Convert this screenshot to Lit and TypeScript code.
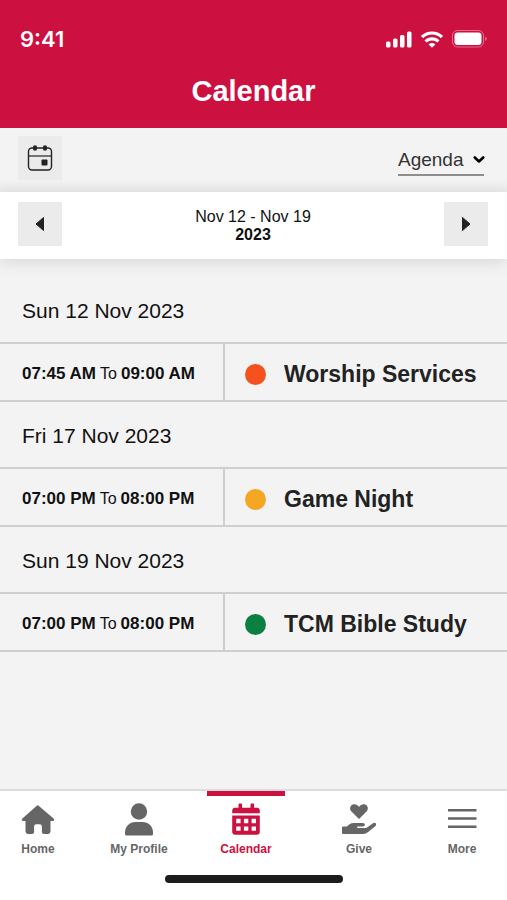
import { LitElement, html, css, svg } from "lit";
import { customElement, state } from "lit/decorators.js";
import { classMap } from "lit/directives/class-map.js";
import { styleMap } from "lit/directives/style-map.js";

const icons = {
  home: svg`<path fill="currentColor" d="M17 2.2 32.6 15.4q.9.8.5 1.8-.3.8-1.4.8H29.500v10.600q0 2.400-2.400 2.400h-4.200q-2 0-2-2v-5.500q0-2.200-2.200-2.200h-3.400q-2.200 0-2.200 2.200V29q0 2-2 2H6.900q-2.400 0-2.400-2.400V18H2.300q-1.100 0-1.400-.8-.4-1 .5-1.800L15.500 3q1.500-1.500 3 0z"/>`,
  profile: svg`<circle cx="17" cy="8.500" r="8.200" fill="currentColor"/><path fill="currentColor" d="M3 31v-1.500C3 23.500 7.500 19 13.500 19h7C26.500 19 31 23.500 31 29.500V31q0 1.500-1.500 1.500h-25Q3 32.500 3 31z"/>`,
  calendar: svg`<path fill="currentColor" fill-rule="evenodd" d="M9.500 1.500q0-1 1-1h1.600q1 0 1 1v3.200h8.400V1.500q0-1 1-1h1.600q1 0 1 1v3.200h2.700q3 0 3 3v2.600H3.200V7.700q0-3 3-3h3.300zM3.200 12.500h27.600v16.300q0 3-3 3H6.200q-3 0-3-3zM7.200 15.800v4.400h4.400v-4.400zm7.700 0v4.400h4.400v-4.400zm7.700 0v4.400H27v-4.400zM7.200 23.400v4.400h4.400v-4.400zm7.700 0v4.400h4.400v-4.400zm7.700 0v4.400H27v-4.400z"/>`,
  give: svg`<path fill="currentColor" d="M17 16 9.500 8.600C7.300 6.300 8 2.900 10.300 1.800 12.700.7 15.300 1.600 17 4c1.700-2.400 4.300-3.300 6.700-2.200 2.300 1.100 3 4.500.8 6.800z"/><path fill="currentColor" d="M0 24.500q0-1 1-1h3.800l3-2.400Q9.500 20 11.500 20h9.400q2 0 2 1.700 0 1.800-2 1.800h-5q-.9 0-.9.800t.9.800h8.300l6.500-4.700q1.800-1.200 3-.1 1.100 1.400-.5 3l-7.400 6q-2 1.700-4.500 1.700H1q-1 0-1-1z"/>`,
  more: svg`<path stroke="currentColor" stroke-width="2.600" d="M3 7.300h28.500M3 15.500h28.500M3 23.700h28.500"/>`,
};

interface AgendaEvent {
  day: string;
  start: string;
  end: string;
  title: string;
  color: string;
}

const events: AgendaEvent[] = [
  { day: "Sun 12 Nov 2023", start: "07:45 AM", end: "09:00 AM", title: "Worship Services", color: "#f4511e" },
  { day: "Fri 17 Nov 2023", start: "07:00 PM", end: "08:00 PM", title: "Game Night", color: "#f5a623" },
  { day: "Sun 19 Nov 2023", start: "07:00 PM", end: "08:00 PM", title: "TCM Bible Study", color: "#0b8043" },
];

const tabs: { id: keyof typeof icons; label: string }[] = [
  { id: "home", label: "Home" },
  { id: "profile", label: "My Profile" },
  { id: "calendar", label: "Calendar" },
  { id: "give", label: "Give" },
  { id: "more", label: "More" },
];

@customElement("app-header")
class AppHeader extends LitElement {
  static styles = css`
    :host {
      display: block;
      background: #cc1040;
      color: #fff;
    }
    .status {
      display: flex;
      justify-content: space-between;
      align-items: center;
      height: 28px;
      padding: 25px 20px 0;
    }
    .time {
      font: 600 22px/28px Inter, "Liberation Sans", sans-serif;
    }
    .signals {
      display: flex;
      align-items: center;
      gap: 9px;
    }
    .title {
      margin: 0;
      padding: 21px 0 20px;
      font-size: 29px;
      line-height: 34px;
      text-align: center;
    }
  `;

  render() {
    return html`
      <div class="status">
        <span class="time">9:41</span>
        <span class="signals">
          <svg width="26" height="17" viewBox="0 0 26 17" fill="#fff" aria-hidden="true">
            <rect x="0" y="10.500" width="4.500" height="6" rx="1.500" />
            <rect x="7" y="7.500" width="4.500" height="9" rx="1.500" />
            <rect x="14" y="4" width="4.500" height="12.500" rx="1.500" />
            <rect x="21" y="0.500" width="4.500" height="16" rx="1.500" />
          </svg>
          <svg width="22" height="17" viewBox="0 0 22 17" fill="none" stroke="#fff" stroke-width="3.200" aria-hidden="true">
            <path d="M1 6.100a14.200 14.200 0 0 1 20 0" />
            <path d="M4.600 10.500a9 9 0 0 1 12.800 0" />
            <path d="M11 16.800 7.600 13.400a4.800 4.800 0 0 1 6.800 0z" fill="#fff" stroke="none" />
          </svg>
          <svg width="35" height="18" viewBox="0 0 35 18" aria-hidden="true">
            <rect x=".5" y=".5" width="31" height="16.500" rx="5" fill="none" stroke="#fff" stroke-opacity=".4" />
            <rect x="2.500" y="2.500" width="27" height="12.500" rx="3" fill="#fff" />
            <path d="M33 6.500q1.800.8 1.800 2.300T33 11z" fill="#fff" fill-opacity=".4" />
          </svg>
        </span>
      </div>
      <h1 class="title">Calendar</h1>
    `;
  }
}

@customElement("agenda-toolbar")
class AgendaToolbar extends LitElement {
  static styles = css`
    :host {
      display: block;
    }
    .bar {
      display: flex;
      justify-content: space-between;
      align-items: center;
      padding: 8px 23px 12px 18px;
      background: linear-gradient(#f3f3f3 80%, #e8e8e8);
    }
    .square {
      display: grid;
      place-items: center;
      width: 44px;
      height: 44px;
      padding: 0;
      border: 0;
      background: #ebebeb;
      color: #222;
    }
    .view {
      display: grid;
      grid-template-columns: 1fr 11px;
      align-items: end;
      height: 34px;
      border-bottom: 2px solid #8e8e8e;
    }
    .choice {
      grid-area: 1 / 1 / 2 / 3;
      appearance: none;
      width: 86px;
      padding: 0;
      border: 0;
      background: none;
      color: #333;
      font: 19px/28px "Liberation Sans", Arial, sans-serif;
    }
    .chevron {
      grid-area: 1 / 2;
      margin-bottom: 9px;
      pointer-events: none;
    }
    .range {
      display: flex;
      justify-content: space-between;
      align-items: center;
      padding: 10px 19px 13px 18px;
      background: #fff;
      box-shadow: 0 4px 14px #0000001a;
    }
    .dates {
      margin: 0;
      padding-top: 4px;
      color: #111;
      font-size: 16px;
      line-height: 18px;
      text-align: center;
    }
    .year {
      display: block;
    }
  `;

  render() {
    return html`
      <div class="bar">
        <button class="square" aria-label="Pick a date">
          <svg width="26" height="28" viewBox="0 0 26 28" aria-hidden="true">
            <rect x="1.500" y="4" width="23" height="22" rx="3.500" fill="none" stroke="currentColor" stroke-width="1.400" />
            <path d="M1.500 12h23" stroke="currentColor" stroke-width="1.200" />
            <circle cx="8" cy="4" r="2.200" fill="currentColor" />
            <circle cx="18" cy="4" r="2.200" fill="currentColor" />
            <path d="M8 1.500v5M18 1.500v5" stroke="currentColor" stroke-width="3" />
            <rect x="14.500" y="15.500" width="6" height="6" rx="1" fill="currentColor" />
          </svg>
        </button>
        <label class="view">
          <select class="choice" aria-label="Calendar view">
            <option>Agenda</option>
            <option>Month</option>
            <option>Week</option>
          </select>
          <svg class="chevron" width="12" height="10" viewBox="0 0 12 10" aria-hidden="true">
            <path d="m1.800 2.500 4.200 4 4.200-4" fill="none" stroke="#000" stroke-width="2.600" stroke-linecap="round" stroke-linejoin="round" />
          </svg>
        </label>
      </div>
      <div class="range">
        <button class="square" aria-label="Previous week">
          <svg width="10" height="16" viewBox="0 0 10 16" aria-hidden="true"><path d="M8.500 1.500v13L1 8z" fill="currentColor" stroke="currentColor" stroke-linejoin="round" /></svg>
        </button>
        <p class="dates">Nov 12 - Nov 19<b class="year">2023</b></p>
        <button class="square" aria-label="Next week">
          <svg width="10" height="16" viewBox="0 0 10 16" aria-hidden="true"><path d="M1.500 1.500v13L9 8z" fill="currentColor" stroke="currentColor" stroke-linejoin="round" /></svg>
        </button>
      </div>
    `;
  }
}

@customElement("agenda-list")
class AgendaList extends LitElement {
  static styles = css`
    :host {
      display: block;
      flex: 1;
      padding-top: 18px;
    }
    .agenda {
      width: 100%;
      border-spacing: 0;
      table-layout: fixed;
    }
    .time-col {
      width: 225px;
    }
    .day {
      box-sizing: border-box;
      height: 65px;
      padding: 2px 22px 0;
      color: #111;
      font-size: 21px;
      font-weight: 400;
      text-align: left;
    }
    .time,
    .event {
      box-sizing: border-box;
      height: 60px;
      padding: 4px 0 0 22px;
      border: 0 solid #cfcfcf;
      border-width: 2px 0;
    }
    .time {
      border-right-width: 2px;
      color: #111;
      font-size: 16px;
      white-space: nowrap;
    }
    .strong {
      font-size: 17px;
    }
    .event {
      padding-left: 20px;
    }
    .line {
      display: flex;
      align-items: center;
      gap: 18px;
      color: #222;
      font-size: 23px;
      font-weight: 700;
    }
    .hours {
      display: flex;
      align-items: baseline;
      gap: 4px;
    }
    .dot {
      flex: none;
      width: 21px;
      height: 21px;
      border-radius: 50%;
    }
  `;

  render() {
    return html`
      <table class="agenda" aria-label="Agenda">
        <colgroup><col class="time-col" /><col /></colgroup>
        ${events.map(
          (e) => html`
            <tbody>
              <tr><th class="day" colspan="2" scope="rowgroup">${e.day}</th></tr>
              <tr>
                <td class="time">
                  <div class="hours"><b class="strong">${e.start}</b><span>To</span><b class="strong">${e.end}</b></div>
                </td>
                <td class="event">
                  <div class="line">
                    <span class="dot" style=${styleMap({ background: e.color })}></span>
                    <span>${e.title}</span>
                  </div>
                </td>
              </tr>
            </tbody>
          `
        )}
      </table>
    `;
  }
}

@customElement("tab-bar")
class TabBar extends LitElement {
  @state() private active = "calendar";

  static styles = css`
    :host {
      display: block;
      border-top: 2px solid #dcdcdc;
      background: #fff;
    }
    .tabs {
      display: grid;
      grid-template-columns:
        minmax(0, 76fr) minmax(0, 126fr) minmax(0, 88fr)
        minmax(0, 138fr) minmax(0, 68fr);
      padding-right: 11px;
    }
    .tab {
      display: flex;
      flex-direction: column;
      align-items: center;
      gap: 5px;
      padding: 0;
      border: 0;
      background: none;
      color: #666;
      font: 700 12px/16px "Liberation Sans", Arial, sans-serif;
      white-space: nowrap;
    }
    .tab::before {
      content: "";
      width: 78px;
      height: 5px;
      margin-bottom: 2px;
    }
    .active {
      color: #cc1040;
    }
    .active::before {
      background: #cc1040;
    }
    .grip {
      width: 178px;
      height: 8px;
      margin: 18px auto 17px;
      border-radius: 4px;
      background: #1c1c1c;
    }
  `;

  render() {
    return html`
      <nav class="tabs" aria-label="Main">
        ${tabs.map(
          (t) => html`
            <button
              class=${classMap({ tab: true, active: t.id === this.active })}
              @click=${() => (this.active = t.id)}
            >
              <svg width="34" height="33" viewBox="0 0 34 33" aria-hidden="true">${icons[t.id]}</svg>
              <span>${t.label}</span>
            </button>
          `
        )}
      </nav>
      <div class="grip"></div>
    `;
  }
}

@customElement("app-root")
class AppRoot extends LitElement {
  static styles = css`
    :host {
      display: flex;
      flex-direction: column;
      min-height: 100vh;
      background: #f3f3f3;
      font-family: "Liberation Sans", Arial, sans-serif;
    }
  `;

  render() {
    return html`
      <app-header></app-header>
      <agenda-toolbar></agenda-toolbar>
      <agenda-list></agenda-list>
      <tab-bar></tab-bar>
    `;
  }
}
